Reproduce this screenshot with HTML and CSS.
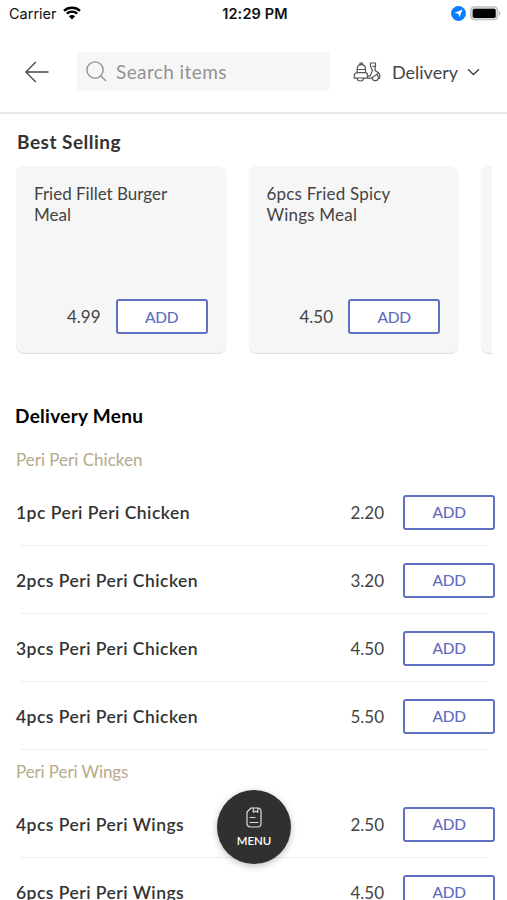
FILE: index.html
```html
<!DOCTYPE html>
<html lang="en">
<head>
<meta charset="utf-8">
<title>Delivery Menu</title>
<link rel="stylesheet" href="styles.css">
</head>
<body>
<div class="app">
  <div class="status">
    <div class="status-left"><span class="carrier">Carrier</span>
      <svg width="18" height="14" viewBox="0 0 18 14"><path d="M1 4.800C5.300.7 12.700.7 17 4.800M3.800 7.700c3-2.800 7.400-2.800 10.400 0" fill="none" stroke="#000" stroke-width="2.400"/><path d="M5.900 10.200c1.800-1.700 4.400-1.700 6.200 0L9 13.400z"/></svg>
    </div>
    <span class="time">12:29 PM</span>
    <div class="status-right">
      <svg width="15" height="15" viewBox="0 0 15 15"><circle cx="7.500" cy="7.500" r="7.400" fill="#087cff"/><path d="M11.600 3.400 8.300 11.500 7.500 7.700 3.300 7z" fill="#fff"/></svg>
      <svg width="31" height="15" viewBox="0 0 31 15"><rect x=".7" y=".8" width="27" height="13" rx="3.500" fill="#d8d8d4" stroke="#b7b7b3"/><rect x="2.700" y="2.700" width="23" height="9.300" rx="1.800"/><path d="M29 5.200c1.700.6 1.700 3.700 0 4.300z" fill="#aaa"/></svg>
    </div>
  </div>
  <header class="header">
    <svg class="back" width="24" height="22" viewBox="0 0 24 22"><path d="M23.500 11H.8M10.800 1 .8 11l10 10" fill="none" stroke="#444" stroke-width="1.300"/></svg>
    <div class="search">
      <svg width="21" height="21" viewBox="0 0 21 21"><g fill="none" stroke="#929292" stroke-width="1.400"><circle cx="9" cy="9" r="8.100"/><path d="m14.800 14.800 5.200 5.200"/></g></svg>
      <span class="placeholder">Search items</span>
    </div>
    <div class="mode">
      <svg width="28" height="20" viewBox="0 0 28 20"><g fill="none" stroke="#555" stroke-width="1.200" stroke-linejoin="round"><path d="M4 16.200H1.200v-1.700c0-2.500 1.300-3.900 3.300-3.900h7.700c1.500 0 2.300.8 2.300 2.300v3.300h-3.800M4.200 10.600V7.500C4.200 4.300 5.800 2.700 8.300 2.700s4.200 1.600 4.200 4.800v3.100M4.300 7.500h8.200M7 2.600V1.200h2.400v1.400M14.500 16.200h3.700l7.600-5.200c1.100 1.100 1.300 2.700.9 5.200h-1.200M14.500 13.800h2.800l2.100-5.300-1.900-4.200V1h5v3.300h-3M22.100 4.300v4.200l3.700 2.500"/><path d="M4.200 16a3.200 3 0 0 0 6.400 0zM19 15.700a3.300 3.300 0 0 0 6.500.4c.2-1.500-.4-2.500-1.600-3.400"/></g></svg>
      <span class="mode-name">Delivery</span>
      <svg width="13" height="8" viewBox="0 0 13 8"><path d="m1 1.200 5.500 5.300L12 1.200" fill="none" stroke="#444" stroke-width="1.400"/></svg>
    </div>
  </header>
  <main>
    <h2 class="best-title">Best Selling</h2>
    <div class="cards">
      <article class="card"><p class="card-name">Fried Fillet Burger<br>Meal</p><div class="card-buy"><span class="price">4.99</span><button class="add">ADD</button></div></article>
      <article class="card"><p class="card-name spicy">6pcs Fried Spicy<br>Wings Meal</p><div class="card-buy"><span class="price">4.50</span><button class="add">ADD</button></div></article>
      <article class="card"></article>
    </div>
    <h2 class="menu-title">Delivery Menu</h2>
    <h3 class="group">Peri Peri Chicken</h3>
    <div class="row"><span class="name">1pc Peri Peri Chicken</span><span class="price">2.20</span><button class="add">ADD</button></div>
    <div class="row"><span class="name">2pcs Peri Peri Chicken</span><span class="price">3.20</span><button class="add">ADD</button></div>
    <div class="row"><span class="name">3pcs Peri Peri Chicken</span><span class="price">4.50</span><button class="add">ADD</button></div>
    <div class="row"><span class="name">4pcs Peri Peri Chicken</span><span class="price">5.50</span><button class="add">ADD</button></div>
    <h3 class="group group-next">Peri Peri Wings</h3>
    <div class="row"><span class="name">4pcs Peri Peri Wings</span><span class="price">2.50</span><button class="add">ADD</button></div>
    <div class="row"><span class="name">6pcs Peri Peri Wings</span><span class="price">4.50</span><button class="add">ADD</button></div>
  </main>
  <button class="fab">
    <svg width="16" height="21" viewBox="0 0 16 21"><g fill="none" stroke="#ddd" stroke-width="1.200" stroke-linecap="round" stroke-linejoin="round"><path d="M5 1h6.500C13.500 1 15 2.500 15 4.500v12c0 2-1.500 3.500-3.500 3.500h-7C2.500 20 1 18.500 1 16.500V5z"/><path d="M7.300 1.200v4l2.200-1 2.300 1v-4M4 10.500h5M4 15.500h8"/></g></svg>
    <span>MENU</span>
  </button>
</div>
</body>
</html>
```
FILE: styles.css
```css
* { box-sizing: border-box; }
body { margin: 0; background: #fff; color: #444; font-family: Lato, sans-serif; }
svg { display: block; flex: none; }
h2, h3, p { margin: 0; }
button { font-family: inherit; padding: 0; }
.app { position: relative; height: 900px; overflow: hidden; }
.status { display: grid; grid-template-columns: 1fr auto 1fr; align-items: center; height: 28px; padding: 0 6px 2px 9px; font-family: Inter, sans-serif; color: #111; }
.status-left { display: flex; align-items: center; gap: 6px; font-size: 14.5px; }
.time { font-size: 14.5px; font-weight: 600; letter-spacing: 0.15px; }
.status-right { display: flex; justify-content: flex-end; gap: 4px; }
.header { display: flex; align-items: center; height: 86px; padding: 3px 27px 0 25px; border-bottom: 2px solid #e7e7e7; }
.search { display: flex; align-items: center; gap: 9px; width: 253px; height: 39px; margin-left: 28px; padding-left: 9px; border-radius: 4px; background: #f6f6f6; }
.placeholder { font-size: 19px; color: #929292; letter-spacing: 0.4px; }
.mode { display: flex; align-items: center; margin-left: 23px; }
.mode-name { margin: 0 9px 0 11px; font-size: 18px; line-height: 22px; }
.best-title { margin: 16px 0 0 17px; font-size: 19px; line-height: 24px; letter-spacing: 0.5px; color: #333; }
.cards { display: flex; gap: 23px; margin: 12px 15px 0 16px; height: 190px; overflow: hidden; }
.card { display: flex; flex: none; flex-direction: column; justify-content: space-between; width: 209.500px; height: 187px; padding: 17px 18px 19px 18px; border-radius: 8px; background: #f6f6f6; box-shadow: 0 1px 1px #ddd; }
.card-name { font-size: 17px; line-height: 21px; }
.spicy { letter-spacing: 0.2px; }
.card-buy { display: flex; justify-content: flex-end; align-items: center; gap: 15px; }
.price { font-size: 17px; }
.add { width: 92px; height: 35px; border: 2px solid #5e70bf; border-radius: 3px; background: #fff; color: #626dbe; font-size: 15.500px; font-weight: 500; letter-spacing: -0.3px; }
.menu-title { margin: 48px 0 0 15px; font-size: 19px; line-height: 24px; letter-spacing: 0.3px; color: #000; }
.group { margin: 22px 0 0 16px; font-size: 17px; line-height: 20px; font-weight: 400; color: #b7aa8c; }
.row { display: flex; align-items: center; height: 68px; margin: 0 12px 0 16px; background: linear-gradient(#eee, #eee) 4px 100% / 468px 1px no-repeat; }
.group + .row { margin-top: 8px; }
.group-next { margin-top: 12px; letter-spacing: -0.1px; }
.row .name { flex: 1; font-size: 17.5px; font-weight: 600; letter-spacing: 0.47px; color: #333; }
.row .add { margin-left: 19px; }
.fab { position: absolute; left: 217px; top: 790px; display: flex; flex-direction: column; align-items: center; width: 74px; height: 74px; padding-top: 17px; border: 0; border-radius: 50%; background: #303030; color: #fff; box-shadow: 0 2px 7px rgba(0,0,0,.25); font-size: 11.5px; font-weight: 600; line-height: 15px; gap: 5px; }
```
